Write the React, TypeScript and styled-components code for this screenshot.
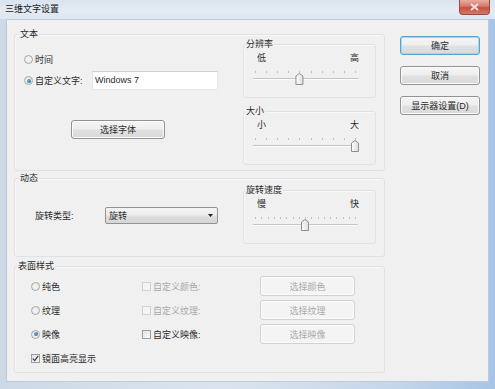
import React from 'react'
import styled, { createGlobalStyle } from 'styled-components'

const GlobalStyle = createGlobalStyle`
    html, body {
        margin: 0;
        padding: 0;
        background: #ffffff;
    }
    body {
        font-family: "Liberation Sans", "Noto Sans CJK SC", sans-serif;
        font-size: 9px;
        color: #2a2a2a;
    }
`

const Window = styled.div`
    width: 495px;
    height: 389px;
    display: flex;
    flex-direction: column;
    background: linear-gradient(90deg, #cdd9e7 0%, #dbe4ee 45%, #c4d6ea 80%, #a6c4e6 100%);
`

const TitleBar = styled.div`
    height: 19px;
    flex: none;
    display: flex;
    align-items: flex-start;
    justify-content: space-between;
    padding: 0 5px;
    background: linear-gradient(180deg, #d9e4f0 0%, #e4ebf3 60%, #dce6f1 100%);
`

const Title = styled.div`
    line-height: 19px;
    color: #1a1a1a;
`

const CloseButton = styled.div`
    width: 31px;
    height: 15px;
    box-sizing: border-box;
    display: flex;
    align-items: center;
    justify-content: center;
    border: 1px solid #9a4a42;
    border-top: none;
    border-radius: 0 0 4px 4px;
    background: linear-gradient(180deg, #e9ad9f 0%, #d6786a 45%, #c5513f 55%, #d47a66 100%);
`

const Frame = styled.div`
    flex: 1;
    display: flex;
    padding: 0 6px 7px 6px;
`

const Client = styled.div`
    flex: 1;
    display: flex;
    align-items: flex-start;
    gap: 15px;
    padding: 14px 0 0 7px;
    background: #f0f0f0;
    border: 1px solid #bccbdb;
`

const LeftColumn = styled.div`
    width: 371px;
    display: flex;
    flex-direction: column;
`

const ButtonColumn = styled.div`
    display: flex;
    flex-direction: column;
    gap: 11px;
    margin-top: 2px;
`

const Group = styled.section<{ $height: number; $top?: number }>`
    box-sizing: border-box;
    height: ${p => p.$height}px;
    margin-top: ${p => p.$top ?? 0}px;
    border: 1px solid #dde2e7;
    border-radius: 3px;
    box-shadow: inset 1px 1px 0 #f8f8f8;
    display: flex;
    flex-direction: column;
`

const GroupTitle = styled.div<{ $left?: number }>`
    width: fit-content;
    height: 13px;
    line-height: 13px;
    margin: -7px 0 0 ${p => p.$left ?? 4}px;
    padding: 0 1px;
    background: #f0f0f0;
`

const GroupBody = styled.div`
    display: flex;
`

const LeftPart = styled.div<{ $pad: number }>`
    width: 228px;
    display: flex;
    flex-direction: column;
    padding-left: ${p => p.$pad}px;
    box-sizing: border-box;
`

const RightPart = styled.div<{ $top: number }>`
    width: 133px;
    display: flex;
    flex-direction: column;
    gap: 13px;
    padding-top: ${p => p.$top}px;
`

const Row = styled.div<{ $top: number; $height: number }>`
    display: flex;
    align-items: center;
    margin-top: ${p => p.$top}px;
    height: ${p => p.$height}px;
`

const Option = styled.label<{ $width?: number; $disabled?: boolean }>`
    display: flex;
    align-items: center;
    gap: 2px;
    width: ${p => (p.$width ? `${p.$width}px` : 'auto')};
    color: ${p => (p.$disabled ? '#a8a8a8' : '#2a2a2a')};
    white-space: nowrap;
`

const RadioMark = styled.span<{ $checked?: boolean }>`
    width: 9px;
    height: 9px;
    box-sizing: border-box;
    border-radius: 50%;
    border: 1px solid #a8a8a8;
    background: radial-gradient(circle, #f6f6f6 0%, #e4e4e4 100%);
    display: flex;
    align-items: center;
    justify-content: center;
    &::after {
        content: '';
        display: ${p => (p.$checked ? 'block' : 'none')};
        width: 4px;
        height: 4px;
        border-radius: 50%;
        background: radial-gradient(circle at 35% 35%, #6fb4d8 0%, #2a6d96 80%);
    }
`

const CheckMark = styled.span<{ $disabled?: boolean }>`
    width: 9px;
    height: 9px;
    box-sizing: border-box;
    border: 1px solid ${p => (p.$disabled ? '#d0d0d0' : '#9d9d9d')};
    background: ${p => (p.$disabled ? '#f4f4f4' : 'linear-gradient(135deg, #e2e2e2, #fbfbfb)')};
    display: flex;
    align-items: center;
    justify-content: center;
`

const TextInput = styled.div`
    width: 126px;
    height: 19px;
    box-sizing: border-box;
    padding-left: 2px;
    line-height: 17px;
    background: #ffffff;
    border: 1px solid #e2e6ea;
    border-top-color: #cdd1d6;
    color: #2a2a2a;
`

const Button = styled.div<{ $width: number; $height?: number; $disabled?: boolean; $default?: boolean }>`
    width: ${p => p.$width}px;
    height: ${p => p.$height ?? 19}px;
    box-sizing: border-box;
    display: flex;
    align-items: center;
    justify-content: center;
    border-radius: 3px;
    border: 1px solid ${p => (p.$disabled ? '#d2d2d2' : p.$default ? '#5aa2cb' : '#939393')};
    background: ${p =>
        p.$disabled
            ? '#f4f4f4'
            : 'linear-gradient(180deg, #f5f5f5 0%, #eeeeee 48%, #e1e1e1 52%, #d9d9d9 100%)'};
    box-shadow: ${p => (p.$default ? 'inset 0 0 0 1px #97dbf3' : 'inset 0 0 0 1px #fbfbfb')};
    color: ${p => (p.$disabled ? '#aaaaaa' : '#2a2a2a')};
`

const Select = styled.div`
    width: 113px;
    height: 17px;
    box-sizing: border-box;
    display: flex;
    align-items: center;
    justify-content: space-between;
    padding: 0 4px 0 3px;
    border: 1px solid #939393;
    border-radius: 2px;
    background: linear-gradient(180deg, #f4f4f4 0%, #ececec 48%, #dfdfdf 52%, #d6d6d6 100%);
`

const FieldLabel = styled.span`
    width: 70px;
`

const SliderLabels = styled.div`
    display: flex;
    justify-content: space-between;
    height: 12px;
    line-height: 12px;
    margin-top: 1px;
    padding: 0 16px 0 13px;
`

const SliderTrack = styled.svg`
    display: block;
    margin: 5px 0 0 6px;
`

const SurfaceGrid = styled.div`
    display: grid;
    grid-template-columns: 111px 118px 95px;
    grid-auto-rows: 20px;
    row-gap: 4px;
    align-items: center;
    padding: 3px 0 0 16px;
`

function Radio({ label, checked, width }: { label: string; checked?: boolean; width?: number }) {
    return (
        <Option $width={width}>
            <RadioMark $checked={checked} />
            <span>{label}</span>
        </Option>
    )
}

function Check({ label, checked, disabled }: { label: string; checked?: boolean; disabled?: boolean }) {
    return (
        <Option $disabled={disabled}>
            <CheckMark $disabled={disabled}>
                {checked && (
                    <svg width="7" height="7" viewBox="0 0 7 7">
                        <path d="M0.8 3.6 L2.7 5.6 L6.2 0.9" fill="none" stroke="#2b3a4a" strokeWidth="1.2" />
                    </svg>
                )}
            </CheckMark>
            <span>{label}</span>
        </Option>
    )
}

function Slider({ title, low, high, ticks, pos }: { title: string; low: string; high: string; ticks: number; pos: number }) {
    const step = 100 / (ticks - 1)
    const cx = 5 + pos * step
    return (
        <Group $height={54}>
            <GroupTitle $left={1}>{title}</GroupTitle>
            <SliderLabels>
                <span>{low}</span>
                <span>{high}</span>
            </SliderLabels>
            <SliderTrack width="112" height="17" viewBox="0 0 112 17">
                <defs>
                    <linearGradient id="thumb" x1="0" y1="0" x2="1" y2="0">
                        <stop offset="0" stopColor="#fdfdfd" />
                        <stop offset="1" stopColor="#dcdcdc" />
                    </linearGradient>
                </defs>
                {Array.from({ length: ticks }, (_, i) => (
                    <rect key={i} x={Math.round(5 + i * step)} y="2" width="1" height="2" fill="#c0c0c0" />
                ))}
                <rect x="3" y="9" width="105" height="1" fill="#c6c6c6" />
                <rect x="3" y="10" width="105" height="1" fill="#fbfbfb" />
                <path
                    d={`M${cx - 3.5} 15.5 L${cx - 3.5} 7 L${cx} 4.5 L${cx + 3.5} 7 L${cx + 3.5} 15.5 Z`}
                    fill="url(#thumb)"
                    stroke="#8f8f8f"
                    strokeWidth="1"
                    strokeLinejoin="round"
                />
            </SliderTrack>
        </Group>
    )
}

export default function App() {
    return (
        <>
            <GlobalStyle />
            <Window>
                <TitleBar>
                    <Title>三维文字设置</Title>
                    <CloseButton>
                        <svg width="9" height="8" viewBox="0 0 9 8">
                            <path d="M1 1 L8 7 M8 1 L1 7" stroke="#f6e4e0" strokeWidth="1.8" />
                        </svg>
                    </CloseButton>
                </TitleBar>
                <Frame>
                    <Client>
                        <LeftColumn>
                            <Group $height={137}>
                                <GroupTitle>文本</GroupTitle>
                                <GroupBody>
                                    <LeftPart $pad={9}>
                                        <Row $top={12} $height={13}>
                                            <Radio label="时间" />
                                        </Row>
                                        <Row $top={5} $height={19}>
                                            <Radio label="自定义文字:" checked width={68} />
                                            <TextInput>Windows 7</TextInput>
                                        </Row>
                                        <Row $top={30} $height={19}>
                                            <Button $width={94} style={{ marginLeft: 47 }}>选择字体</Button>
                                        </Row>
                                    </LeftPart>
                                    <RightPart $top={3}>
                                        <Slider title="分辨率" low="低" high="高" ticks={10} pos={4} />
                                        <Slider title="大小" low="小" high="大" ticks={10} pos={9} />
                                    </RightPart>
                                </GroupBody>
                            </Group>

                            <Group $height={79} $top={7}>
                                <GroupTitle>动态</GroupTitle>
                                <GroupBody>
                                    <LeftPart $pad={20}>
                                        <Row $top={22} $height={17}>
                                            <FieldLabel>旋转类型:</FieldLabel>
                                            <Select>
                                                <span>旋转</span>
                                                <svg width="5" height="3" viewBox="0 0 5 3">
                                                    <path d="M0 0 H5 L2.5 3 Z" fill="#222" />
                                                </svg>
                                            </Select>
                                        </Row>
                                    </LeftPart>
                                    <RightPart $top={5}>
                                        <Slider title="旋转速度" low="慢" high="快" ticks={17} pos={8} />
                                    </RightPart>
                                </GroupBody>
                            </Group>

                            <Group $height={107} $top={9}>
                                <GroupTitle $left={2}>表面样式</GroupTitle>
                                <SurfaceGrid>
                                    <Radio label="纯色" />
                                    <Check label="自定义颜色:" disabled />
                                    <Button $width={95} $height={20} $disabled>选择颜色</Button>
                                    <Radio label="纹理" />
                                    <Check label="自定义纹理:" disabled />
                                    <Button $width={95} $height={20} $disabled>选择纹理</Button>
                                    <Radio label="映像" checked />
                                    <Check label="自定义映像:" />
                                    <Button $width={95} $height={20} $disabled>选择映像</Button>
                                    <Check label="镜面高亮显示" checked />
                                </SurfaceGrid>
                            </Group>
                        </LeftColumn>

                        <ButtonColumn>
                            <Button $width={80} $default>确定</Button>
                            <Button $width={80}>取消</Button>
                            <Button $width={80}>显示器设置(D)</Button>
                        </ButtonColumn>
                    </Client>
                </Frame>
            </Window>
        </>
    )
}
